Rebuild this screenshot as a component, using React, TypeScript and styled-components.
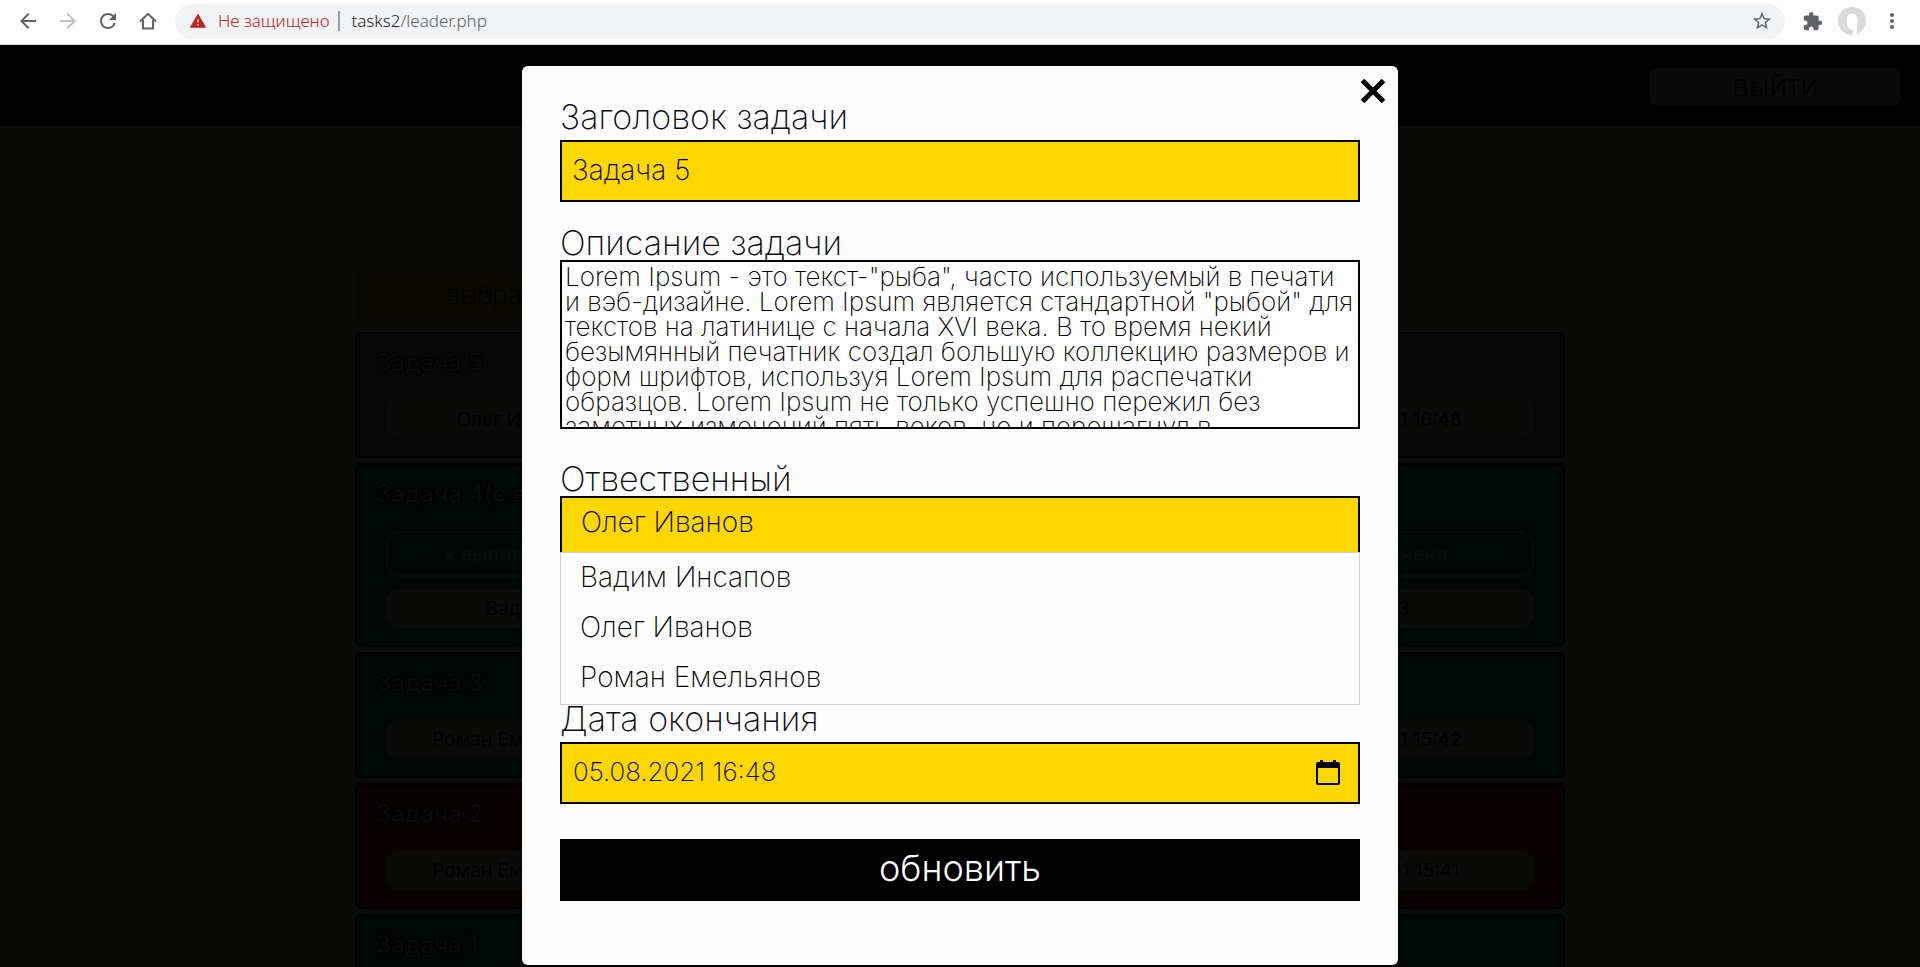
import React, { useState } from 'react';
import styled, { createGlobalStyle } from 'styled-components';
import {
  MdArrowBack,
  MdArrowForward,
  MdExtension,
  MdMoreVert,
  MdRefresh,
  MdStarBorder,
  MdWarning,
} from 'react-icons/md';

const GlobalStyle = createGlobalStyle`
  *, *::before, *::after { box-sizing: border-box; }
  body {
    margin: 0;
    font-family: Inter, "Noto Sans", sans-serif;
    font-weight: 200;
    color: #000;
    background: #0a0a08;
  }
  button, input, select, textarea { font: inherit; color: inherit; }
`;

const Window = styled.div`
  display: flex;
  flex-direction: column;
  height: 100vh;
  min-height: 920px;
  overflow: hidden;
`;

/* Browser toolbar */

const BrowserBar = styled.nav`
  display: flex;
  align-items: center;
  flex: none;
  height: 45px;
  padding: 0 16px 2px;
  background: #fff;
  border-bottom: 1px solid #d5d7da;
`;

const NavButtons = styled.div`
  display: flex;
  gap: 16px;
  margin-right: 15px;
`;

const IconButton = styled.button<{ $muted?: boolean }>`
  display: grid;
  place-items: center;
  width: 24px;
  height: 24px;
  padding: 0;
  border: 0;
  background: none;
  color: ${(p) => (p.$muted ? '#bdc0c3' : '#5f6368')};
`;

const Omnibox = styled.div`
  display: flex;
  align-items: center;
  flex: 1;
  height: 35px;
  padding: 0 11px 0 14px;
  border-radius: 18px;
  background: #f1f3f4;
  font: 300 17px/24px "Noto Sans", sans-serif;
`;

const Insecure = styled.span`
  display: flex;
  align-items: center;
  gap: 11px;
  padding-right: 9px;
  color: #c5221f;
`;

const Divider = styled.span`
  width: 2px;
  height: 20px;
  margin-right: 11px;
  background: #9aa0a6;
`;

const Address = styled.span`
  flex: 1;
  color: #5f6368;
`;

const Host = styled.span`
  color: #202124;
`;

const BarActions = styled.div`
  display: flex;
  align-items: center;
  gap: 14px;
  margin-left: 15px;
`;

const Avatar = styled.button`
  width: 28px;
  height: 28px;
  padding: 0;
  border: 0;
  border-radius: 50%;
  overflow: hidden;
  background: #dadada;
`;

/* Task list page */

const Page = styled.div`
  position: relative;
  flex: 1;
  min-height: 0;
  overflow: hidden;
  background: #fafac8;
`;

const Header = styled.header`
  display: flex;
  justify-content: flex-end;
  height: 81px;
  padding: 23px 20px 0;
  background: #000;
`;

const Logout = styled.button`
  width: 250px;
  height: 37px;
  padding: 0 0 4px;
  border: 0;
  border-radius: 6px;
  background: #fafafa;
  font-size: 30px;
  font-weight: 300;
  line-height: 32px;
`;

const Board = styled.main`
  display: flex;
  flex-direction: column;
  gap: 5px;
  width: 63%;
  margin: 146px auto 0;
`;

const PickButton = styled.button`
  width: 282px;
  height: 48px;
  margin-bottom: 7px;
  padding: 0 0 4px;
  border: 0;
  background: #ffd700;
  font-size: 26px;
`;

const tones = { plain: '#b4b4b9', green: '#1eb95f', red: '#be461e' };
type Tone = keyof typeof tones;

const Card = styled.article<{ $tone: Tone }>`
  display: flex;
  flex-direction: column;
  gap: 12px;
  min-height: 126px;
  padding: 14px 29px 17px;
  border: 2px solid #000;
  border-radius: 6px;
  background: ${(p) => tones[p.$tone]};
`;

const CardTitle = styled.h2`
  margin: 0 0 10px -10px;
  color: #fafafa;
  font-size: 24px;
  font-weight: 500;
  line-height: 30px;
  text-shadow: 1px 1px 0 #000, -1px -1px 0 #000, 1px -1px 0 #000, -1px 1px 0 #000;
`;

const PillRow = styled.div`
  display: flex;
  justify-content: space-between;
`;

const Pill = styled.span<{ $wide?: boolean }>`
  width: ${(p) => (p.$wide ? 298 : 260)}px;
  border-radius: 14px;
  background: #fafae6;
  font-size: 19px;
  font-weight: 400;
  line-height: 39px;
  text-align: center;
`;

const PillButton = styled.button<{ $wide?: boolean }>`
  width: ${(p) => (p.$wide ? 298 : 260)}px;
  height: 46px;
  padding: 0;
  border: 2px solid #fafafa;
  border-radius: 14px;
  background: none;
  color: #fafafa;
  font-size: 20px;
  font-weight: 500;
`;

/* Edit dialog */

const Backdrop = styled.div`
  position: absolute;
  inset: 0;
  padding-top: 21px;
  background: rgba(0, 0, 0, 0.96);
`;

const Dialog = styled.form`
  position: relative;
  display: flex;
  flex-direction: column;
  max-width: 876px;
  margin: 0 auto;
  padding: 34px 38px 64px;
  border-radius: 6px;
  background: #fefefe;
`;

const CloseButton = styled.button`
  position: absolute;
  top: 12px;
  right: 12px;
  width: 26px;
  height: 26px;
  padding: 0;
  border: 0;
  background: none;
  line-height: 0;
`;

const Field = styled.div<{ $after: number }>`
  display: flex;
  flex-direction: column;
  position: relative;
  margin-bottom: ${(p) => p.$after}px;
`;

const Label = styled.label<{ $gap?: number }>`
  margin-bottom: ${(p) => p.$gap ?? 0}px;
  color: #0b0b12;
  font-size: 34px;
  line-height: 34px;
`;

const TextInput = styled.input`
  width: 100%;
  height: 62px;
  padding: 0 10px 2px;
  border: 2px solid #000;
  border-radius: 0;
  outline: 0;
  background: #ffd700;
  font-size: 28px;
`;

const DateInput = styled(TextInput)`
  padding: 0 11px 4px;
  font-size: 26px;
`;

const TextArea = styled.textarea`
  height: 169px;
  padding: 2px 3px;
  border: 2px solid #000;
  border-radius: 0;
  outline: 0;
  resize: none;
  overflow: hidden;
  white-space: pre;
  background: #fff;
  font-size: 26px;
  line-height: 25px;
`;

const Select = styled.select`
  appearance: none;
  height: 62px;
  padding: 0 19px 10px;
  border: 2px solid #000;
  border-radius: 0;
  outline: 0;
  background: #ffd700;
  font-size: 28px;
`;

const Options = styled.ul`
  position: absolute;
  top: 90px;
  left: 0;
  right: 0;
  margin: 0;
  padding: 0 0 1px;
  list-style: none;
  background: #fefefe;
  border: 1px solid #cdcfd8;
`;

const Option = styled.button`
  display: block;
  width: 100%;
  height: 50px;
  padding: 0 19px 2px;
  border: 0;
  background: none;
  font-size: 28px;
  text-align: left;
`;

const DateBox = styled.div`
  position: relative;
`;

const CalendarButton = styled.button`
  position: absolute;
  top: 18px;
  right: 20px;
  width: 24px;
  height: 26px;
  padding: 0;
  border: 0;
  background: none;
  line-height: 0;
`;

const Submit = styled.button`
  height: 62px;
  padding: 0 0 4px;
  border: 0;
  background: #000;
  color: #fff;
  font-size: 36px;
  font-weight: 300;
`;

const people = ['Вадим Инсапов', 'Олег Иванов', 'Роман Емельянов'];

const description = `Lorem Ipsum - это текст-"рыба", часто используемый в печати
и вэб-дизайне. Lorem Ipsum является стандартной "рыбой" для
текстов на латинице с начала XVI века. В то время некий
безымянный печатник создал большую коллекцию размеров и
форм шрифтов, используя Lorem Ipsum для распечатки
образцов. Lorem Ipsum не только успешно пережил без
заметных изменений пять веков, но и перешагнул в`;

interface Task {
  title: string;
  tone: Tone;
  person?: string;
  due?: string;
  actions?: [string, string];
}

const tasks: Task[] = [
  { title: 'Задача 5', person: 'Олег Иванов', due: '05.08.2021 16:48', tone: 'plain' },
  { title: 'Задача 4(с в', person: 'Вадим', due: '15:43', tone: 'green', actions: ['к выполнению', 'не отменена'] },
  { title: 'Задача 3', person: 'Роман Емельянов', due: '05.08.2021 15:42', tone: 'green' },
  { title: 'Задача 2', person: 'Роман Емельянов', due: '05.08.2021 15:41', tone: 'red' },
  { title: 'Задача 1', tone: 'green' },
];

function TaskCard({ task }: { task: Task }) {
  return (
    <Card $tone={task.tone}>
      <CardTitle>{task.title}</CardTitle>
      {task.actions && (
        <PillRow>
          <PillButton>{task.actions[0]}</PillButton>
          <PillButton $wide>{task.actions[1]}</PillButton>
        </PillRow>
      )}
      {task.person && (
        <PillRow>
          <Pill>{task.person}</Pill>
          <Pill $wide>{task.due}</Pill>
        </PillRow>
      )}
    </Card>
  );
}

function Toolbar() {
  return (
    <BrowserBar>
      <NavButtons>
        <IconButton aria-label="Назад"><MdArrowBack size={24} /></IconButton>
        <IconButton aria-label="Вперёд" $muted><MdArrowForward size={24} /></IconButton>
        <IconButton aria-label="Обновить"><MdRefresh size={24} /></IconButton>
        <IconButton aria-label="Домой">
          <svg width="18" height="18" viewBox="0 0 18 18" fill="none" stroke="currentColor" strokeWidth="2">
            <path d="M1 9.5L9 1.8l8 7.7M4 8v8.5h10V8" />
          </svg>
        </IconButton>
      </NavButtons>
      <Omnibox>
        <Insecure>
          <MdWarning size={18} />
          Не защищено
        </Insecure>
        <Divider />
        <Address><Host>tasks2</Host>/leader.php</Address>
        <IconButton aria-label="Закладка"><MdStarBorder size={22} /></IconButton>
      </Omnibox>
      <BarActions>
        <IconButton aria-label="Расширения"><MdExtension size={21} /></IconButton>
        <Avatar aria-label="Профиль">
          <svg width="28" height="28" viewBox="0 0 28 28">
            <path d="M14 6c-4 0-6 3-6 8 0 4 2 8 4 9l3 1-2 4h7c-1-3-1-6 0-9 1-6 0-13-6-13z" fill="#fff" stroke="#c9d3da" />
          </svg>
        </Avatar>
        <IconButton aria-label="Меню"><MdMoreVert size={24} /></IconButton>
      </BarActions>
    </BrowserBar>
  );
}

export default function App() {
  const [person, setPerson] = useState('Олег Иванов');

  return (
    <Window>
      <GlobalStyle />
      <Toolbar />
      <Page>
        <Header>
          <Logout>выйти</Logout>
        </Header>
        <Board>
          <PickButton>выбрать</PickButton>
          {tasks.map((task) => <TaskCard key={task.title} task={task} />)}
        </Board>
        <Backdrop>
          <Dialog role="dialog" onSubmit={(e) => e.preventDefault()}>
            <CloseButton type="button" aria-label="Закрыть">
              <svg width="26" height="26" viewBox="0 0 26 26">
                <path d="M2.5 2.5l21 21M23.5 2.5l-21 21" stroke="#000" strokeWidth="5" />
              </svg>
            </CloseButton>
            <Field $after={24}>
              <Label htmlFor="title" $gap={6}>Заголовок задачи</Label>
              <TextInput id="title" defaultValue="Задача 5" />
            </Field>
            <Field $after={33}>
              <Label htmlFor="text">Описание задачи</Label>
              <TextArea id="text" defaultValue={description} />
            </Field>
            <Field $after={144}>
              <Label htmlFor="person">Отвественный</Label>
              <Select id="person" value={person} onChange={(e) => setPerson(e.target.value)}>
                {people.map((name) => <option key={name}>{name}</option>)}
              </Select>
              <Options>
                {people.map((name) => (
                  <li key={name}>
                    <Option type="button" onClick={() => setPerson(name)}>{name}</Option>
                  </li>
                ))}
              </Options>
            </Field>
            <Field $after={35}>
              <Label htmlFor="due" $gap={6}>Дата окончания</Label>
              <DateBox>
                <DateInput id="due" defaultValue="05.08.2021 16:48" />
                <CalendarButton type="button" aria-label="Открыть календарь">
                  <svg width="24" height="26" viewBox="0 0 24 26">
                    <path d="M4 0h3v2h10V0h3v2h2a2 2 0 0 1 2 2v19a2 2 0 0 1-2 2H2a2 2 0 0 1-2-2V4a2 2 0 0 1 2-2h2zM2 8v15h20V8z" fill="#000" fillRule="evenodd" />
                  </svg>
                </CalendarButton>
              </DateBox>
            </Field>
            <Submit type="submit">обновить</Submit>
          </Dialog>
        </Backdrop>
      </Page>
    </Window>
  );
}
